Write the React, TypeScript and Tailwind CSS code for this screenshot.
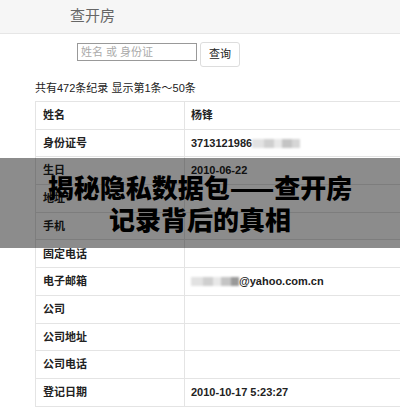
const rows: { label: string; value?: string; kind?: "id" | "email" }[] = [
  { label: "姓名", value: "杨锋" },
  { label: "身份证号", value: "3713121986", kind: "id" },
  { label: "生日", value: "2010-06-22" },
  { label: "地址" },
  { label: "手机" },
  { label: "固定电话" },
  { label: "电子邮箱", value: "@yahoo.com.cn", kind: "email" },
  { label: "公司" },
  { label: "公司地址" },
  { label: "公司电话" },
  { label: "登记日期", value: "2010-10-17 5:23:27" },
];

// pixelated privacy blur
function Blur({ dark }: { dark?: boolean }) {
  return (
    <span className="inline-flex h-[9px] items-center blur-[1px]">
      <span className="h-[9px] w-[12px] bg-[#e2e2e2]" />
      <span className="h-[9px] w-[10px] bg-[#cfcfcf]" />
      <span className="h-[9px] w-[8px] bg-[#e8e8e8]" />
      <span className="h-[9px] w-[10px] bg-[#c4c4c4]" />
      <span className={dark ? "h-[9px] w-[8px] bg-[#999]" : "h-[9px] w-[8px] bg-[#d6d6d6]"} />
    </span>
  );
}

export default function App() {
  return (
    <div
      className="relative h-[408px] w-[400px] overflow-hidden bg-white text-[#222]"
      style={{ fontFamily: '"Liberation Sans", "Noto Sans CJK SC", sans-serif' }}
    >
      <div className="flex h-[34px] items-center border-b border-[#e6e6e6] bg-[#f6f6f6] pl-[70px] text-[15px] text-[#666]">
        查开房
      </div>

      <div className="mt-[8px] flex items-start pl-[77px]">
        <div className="mt-[1px] flex h-[18px] w-[120px] items-center border border-[#999] px-[3px] text-[11px] text-[#aaa]">
          姓名 或 身份证
        </div>
        <button
          type="button"
          className="ml-[3px] flex h-[25px] w-[40px] items-center justify-center rounded-[3px] border border-[#ddd] bg-white text-[11px] text-[#222]"
        >
          查询
        </button>
      </div>

      <p className="mt-[14px] pl-[35px] text-[11px] leading-[14px] text-[#222]">共有472条纪录 显示第1条～50条</p>

      <div className="mt-[6px] ml-[35px] w-[400px] border-t border-l border-[#e4e4e4]">
        {rows.map((r) => (
          <div key={r.label} className="flex h-[27.7px] items-center border-b border-[#e4e4e4] text-[11px] font-bold">
            <div className="flex h-full w-[149px] items-center border-r border-[#e4e4e4] pl-[7px]">{r.label}</div>
            <div className="flex items-center pl-[6px]">
              {r.kind === "email" && <Blur dark />}
              {r.value}
              {r.kind === "id" && <Blur />}
            </div>
          </div>
        ))}
      </div>

      <div className="absolute left-0 top-[158px] flex h-[90px] w-full flex-col items-center justify-center bg-black/45">
        <p className="text-[26px] font-black leading-[32px] text-black" style={{ fontFamily: '"Noto Sans CJK SC", sans-serif' }}>
          揭秘隐私数据包——查开房
        </p>
        <p className="text-[26px] font-black leading-[32px] text-black" style={{ fontFamily: '"Noto Sans CJK SC", sans-serif' }}>
          记录背后的真相
        </p>
      </div>
    </div>
  );
}
